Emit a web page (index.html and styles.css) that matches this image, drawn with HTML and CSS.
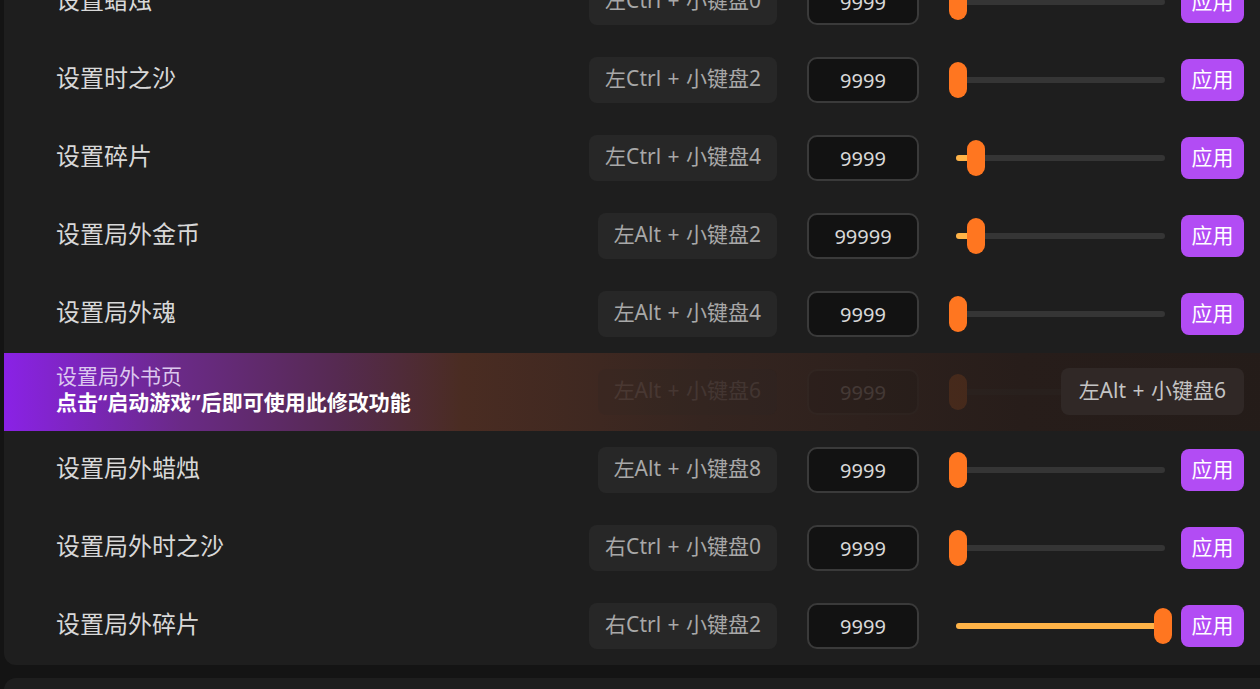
FILE: index.html
```html
<!DOCTYPE html>
<html lang="zh-CN">

<head>
    <meta charset="UTF-8">
    <meta name="viewport" content="width=device-width, initial-scale=1.0">
    <title>修改器</title>
    <link rel="stylesheet" href="styles.css">
</head>

<body>

    <div class="page">
        <section class="card">

            <div class="row">
                <span class="label">设置蜡烛</span>
                <span class="key">左Ctrl + 小键盘0</span>
                <input class="num" type="text" value="9999">
                <div class="slider" style="--v: 0"><div class="track"><div class="fill"></div></div><div class="thumb"></div></div>
                <button class="apply">应用</button>
            </div>

            <div class="row">
                <span class="label">设置时之沙</span>
                <span class="key">左Ctrl + 小键盘2</span>
                <input class="num" type="text" value="9999">
                <div class="slider" style="--v: 0"><div class="track"><div class="fill"></div></div><div class="thumb"></div></div>
                <button class="apply">应用</button>
            </div>

            <div class="row">
                <span class="label">设置碎片</span>
                <span class="key">左Ctrl + 小键盘4</span>
                <input class="num" type="text" value="9999">
                <div class="slider" style="--v: 0.088"><div class="track"><div class="fill"></div></div><div class="thumb"></div></div>
                <button class="apply">应用</button>
            </div>

            <div class="row">
                <span class="label">设置局外金币</span>
                <span class="key">左Alt + 小键盘2</span>
                <input class="num" type="text" value="99999">
                <div class="slider" style="--v: 0.088"><div class="track"><div class="fill"></div></div><div class="thumb"></div></div>
                <button class="apply">应用</button>
            </div>

            <div class="row">
                <span class="label">设置局外魂</span>
                <span class="key">左Alt + 小键盘4</span>
                <input class="num" type="text" value="9999">
                <div class="slider" style="--v: 0"><div class="track"><div class="fill"></div></div><div class="thumb"></div></div>
                <button class="apply">应用</button>
            </div>

            <!-- 未启动游戏时的提示状态 -->
            <div class="row locked">
                <div class="label lock-text">
                    <span class="lock-name">设置局外书页</span>
                    <strong class="lock-tip">点击“启动游戏”后即可使用此修改功能</strong>
                </div>
                <span class="key">左Alt + 小键盘6</span>
                <input class="num" type="text" value="9999">
                <div class="slider" style="--v: 0"><div class="track"><div class="fill"></div></div><div class="thumb"></div></div>
                <button class="apply">应用</button>
                <span class="hover-key">左Alt + 小键盘6</span>
            </div>

            <div class="row">
                <span class="label">设置局外蜡烛</span>
                <span class="key">左Alt + 小键盘8</span>
                <input class="num" type="text" value="9999">
                <div class="slider" style="--v: 0"><div class="track"><div class="fill"></div></div><div class="thumb"></div></div>
                <button class="apply">应用</button>
            </div>

            <div class="row">
                <span class="label">设置局外时之沙</span>
                <span class="key">右Ctrl + 小键盘0</span>
                <input class="num" type="text" value="9999">
                <div class="slider" style="--v: 0"><div class="track"><div class="fill"></div></div><div class="thumb"></div></div>
                <button class="apply">应用</button>
            </div>

            <div class="row">
                <span class="label">设置局外碎片</span>
                <span class="key">右Ctrl + 小键盘2</span>
                <input class="num" type="text" value="9999">
                <div class="slider" style="--v: 1"><div class="track"><div class="fill"></div></div><div class="thumb"></div></div>
                <button class="apply">应用</button>
            </div>

        </section>

        <section class="card next"></section>
    </div>

</body>

</html>
```

FILE: styles.css
```css
html, body {
    margin: 0px;
    padding: 0px;
    background: #141414;
    overflow: hidden;
}

body {
    font-family: "Noto Sans", "Noto Sans CJK SC", sans-serif;
    color: #d6d6d6;
}

.page {
    padding-left: 4px;
    width: 1272px;
}

.card {
    background: #1e1e1e;
    border-radius: 12px;
    margin-top: -37px;
    overflow: hidden;
}

.card.next {
    margin-top: 13px;
    height: 120px;
}

.row {
    position: relative;
    display: flex;
    align-items: center;
    height: 78px;
    padding: 0px 32px 0px 52px;
}

.label {
    flex: 1;
    font-size: 24px;
    color: #d8d8d8;
    line-height: 1;
    padding-bottom: 5px;
}

.key {
    background: #272727;
    color: #a8a8a8;
    font-size: 21px;
    word-spacing: 1px;
    line-height: 42px;
    height: 46px;
    padding: 0px 16px;
    border-radius: 8px;
    white-space: nowrap;
}

.num {
    box-sizing: border-box;
    width: 112px;
    height: 46px;
    margin-left: 30px;
    background: #121212;
    border: 2px solid #3a3a3a;
    border-radius: 10px;
    color: #d8d8d8;
    font-family: inherit;
    font-size: 20px;
    text-align: center;
    padding: 0px;
    outline: none;
}

.slider {
    position: relative;
    width: 223px;
    height: 36px;
    margin-left: 30px;
}

.slider .track {
    position: absolute;
    left: 7px;
    right: 7px;
    top: 15px;
    height: 6px;
    border-radius: 3px;
    background: #353535;
}

.slider .fill {
    height: 100%;
    border-radius: 3px;
    background: #ffb347;
    width: calc(var(--v) * 205px + 4px);
}

.slider .thumb {
    position: absolute;
    top: 0px;
    left: calc(var(--v) * 205px);
    width: 18px;
    height: 36px;
    border-radius: 9px;
    background: #ff7620;
}

.apply {
    margin-left: 9px;
    width: 63px;
    height: 42px;
    border: none;
    border-radius: 8px;
    background: #b24cf4;
    color: white;
    font-family: inherit;
    font-size: 21px;
    padding: 0px 0px 5px;
    cursor: pointer;
}

/* 锁定行 */
.row.locked {
    background: linear-gradient(90deg, #8a22e6 0%, #6a2a86 14%, #562a52 26%, #4a2c22 36%, #352520 55%, #271d1a 80%, #241c19 100%);
}

.row.locked .key,
.row.locked .num,
.row.locked .slider {
    opacity: 0.13;
}

.row.locked .apply {
    visibility: hidden;
}

.lock-text {
    display: flex;
    flex-direction: column;
    gap: 5px;
    padding-bottom: 6px;
}

.lock-name {
    font-size: 21px;
    color: #dcc8ee;
}

.lock-tip {
    font-size: 21px;
    font-weight: bold;
    color: #ffffff;
}

.hover-key {
    position: absolute;
    right: 32px;
    top: 15px;
    height: 47px;
    line-height: 44px;
    padding: 0px 18px;
    border-radius: 8px;
    background: #302826;
    color: #c4c4c4;
    font-size: 21px;
    word-spacing: 1px;
    white-space: nowrap;
}
```
